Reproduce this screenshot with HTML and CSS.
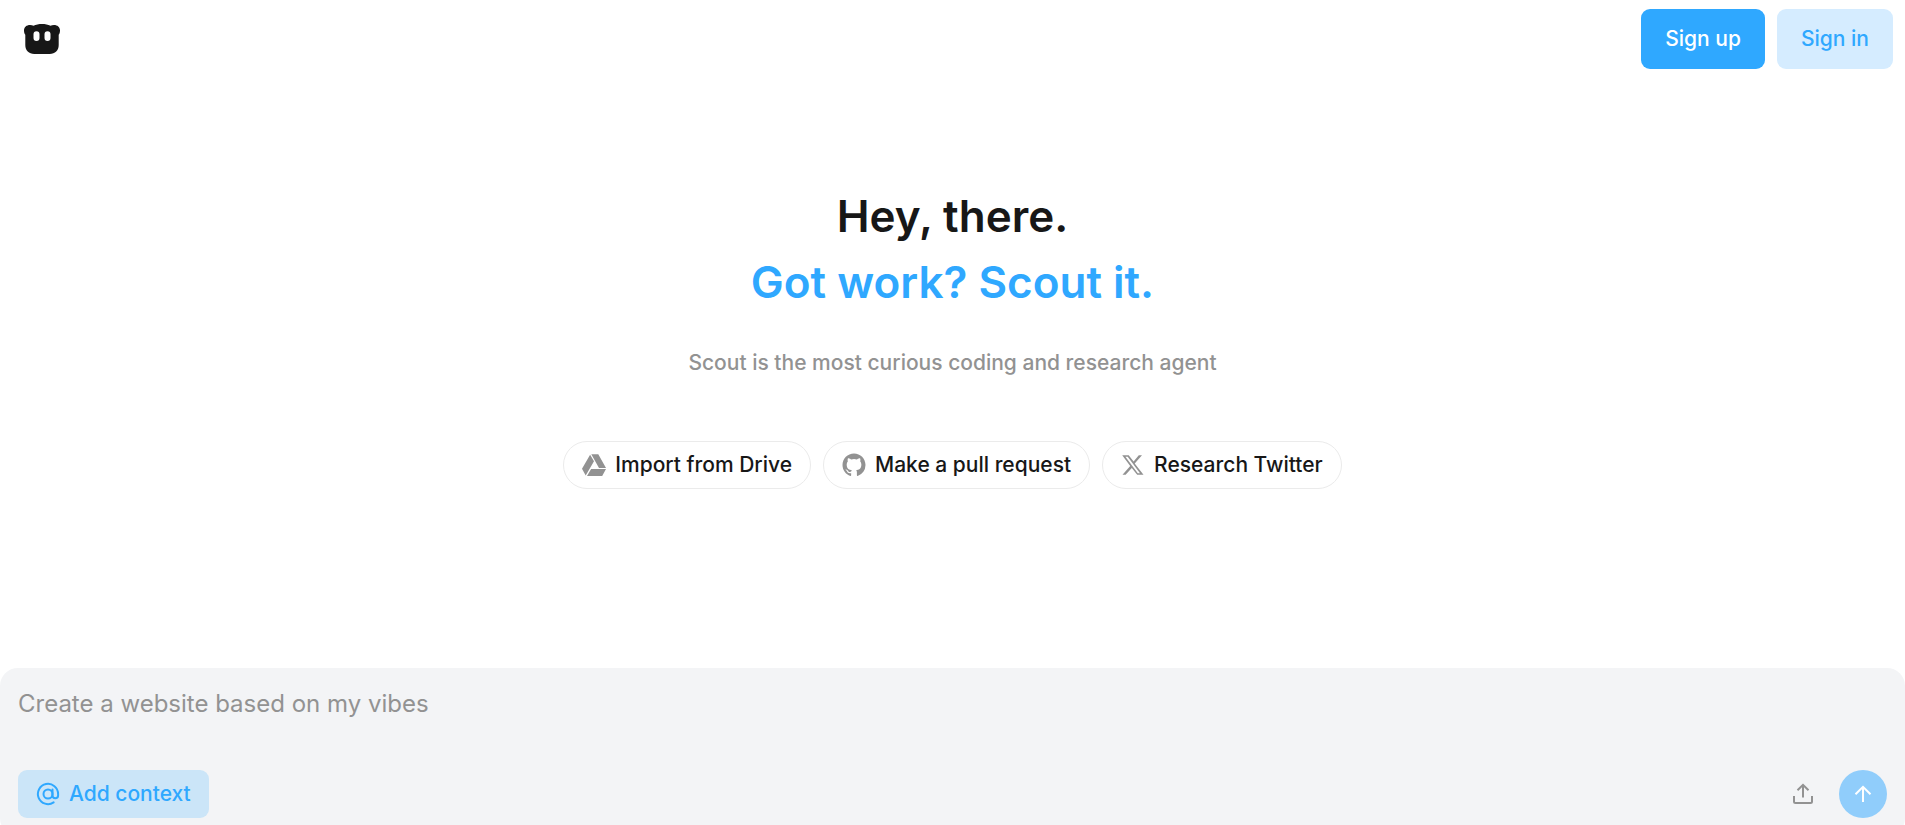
FILE: index.html
```html
<!DOCTYPE html>
<html lang="en">
<head>
    <meta charset="UTF-8">
    <meta name="viewport" content="width=device-width, initial-scale=1.0">
    <title>Scout</title>
    <link rel="stylesheet" href="styles.css">
</head>
<body>
    <header class="header">
        <a href="#" class="logo" aria-label="Scout">
            <svg width="36" height="30" viewBox="0 0 36 30">
                <path fill="#171717" fill-rule="evenodd" d="M9.500 1.800C12 .6 14.800 0 18 0s6 .6 8.500 1.800C27.400 1.200 28.600.9 30 .9c3.400 0 6 2.200 6 5.300 0 2-.5 3.600-1.300 4.500V21c0 5.500-3.600 9-9 9H10.300c-5.400 0-9-3.500-9-9V10.700C.5 9.800 0 8.200 0 6.200 0 3.100 2.600.9 6 .9c1.400 0 2.600.3 3.500.9ZM12.500 7.300a3 3 0 0 0-3 3v3.600a3 3 0 0 0 6 0v-3.600a3 3 0 0 0-3-3Zm11 0a3 3 0 0 0-3 3v3.600a3 3 0 0 0 6 0v-3.600a3 3 0 0 0-3-3Z"/>
            </svg>
        </a>
        <nav class="auth">
            <a href="#" class="auth-link primary">Sign up</a>
            <a href="#" class="auth-link">Sign in</a>
        </nav>
    </header>

    <main class="hero">
        <h1 class="title">Hey, there.<br><span class="title-accent">Got work? Scout it.</span></h1>
        <p class="subtitle">Scout is the most curious coding and research agent</p>
        <div class="chips">
            <button type="button" class="chip">
                <svg width="24" height="24" viewBox="0 0 24 24" fill="currentColor">
                    <path d="M8.100 1.800 0 15.800l3.700 6.700 8.300-14.200ZM9.300 1.300l7.700 13.600h7L16.300 1.300ZM9.100 15.900 5 22.900h15.200L24 15.900Z"/>
                </svg>
                Import from Drive
            </button>
            <button type="button" class="chip">
                <svg width="24" height="24" viewBox="0 0 24 24" fill="currentColor">
                    <path d="M12 .5C5.650.5.5 5.650.5 12c0 5.080 3.290 9.390 7.860 10.910.58.110.79-.25.79-.56v-2.140c-3.200.7-3.870-1.360-3.870-1.360-.52-1.330-1.280-1.680-1.280-1.680-1.040-.71.080-.7.080-.7 1.160.080 1.770 1.190 1.770 1.190 1.030 1.760 2.700 1.250 3.350.96.100-.75.400-1.250.73-1.540-2.550-.29-5.240-1.280-5.240-5.690 0-1.260.45-2.280 1.190-3.090-.12-.29-.52-1.460.11-3.040 0 0 .96-.31 3.160 1.180a10.900 10.900 0 0 1 5.760 0c2.190-1.490 3.150-1.180 3.150-1.180.63 1.580.23 2.750.12 3.040.74.810 1.180 1.830 1.180 3.090 0 4.420-2.690 5.390-5.250 5.680.41.360.78 1.060.78 2.130v3.160c0 .31.210.67.800.56A11.500 11.500 0 0 0 23.500 12C23.500 5.650 18.350.5 12 .5Z"/>
                </svg>
                Make a pull request
            </button>
            <button type="button" class="chip">
                <svg width="24" height="24" viewBox="0 0 24 24" fill="currentColor">
                    <path d="M17.800 2.200H21l-7.300 8.300L22.500 21.800h-6.300l-5.400-6.900-6.200 6.900H1.500l7.700-8.800L1.200 2.200h6.500l4.900 6.300ZM16.800 20.200h2.200L6.700 3.800H4.400Z" fill-rule="evenodd"/>
                </svg>
                Research Twitter
            </button>
        </div>
    </main>

    <form class="composer">
        <textarea class="prompt" rows="2" aria-label="Message" placeholder="Create a website based on my vibes"></textarea>
        <div class="toolbar">
            <button type="button" class="context-button">
                <svg width="24" height="24" viewBox="0 0 24 24" fill="none" stroke="currentColor" stroke-width="2" stroke-linecap="round">
                    <circle cx="12" cy="12" r="4.500"/>
                    <path d="M16.500 7.500v6a2.800 2.800 0 0 0 5.600 0V12a10.100 10.100 0 1 0-4.500 8.400"/>
                </svg>
                Add context
            </button>
            <div class="actions">
                <button type="button" class="icon-button" aria-label="Upload file">
                    <svg width="24" height="24" viewBox="0 0 24 24" fill="none" stroke="currentColor" stroke-width="2">
                        <path d="M12 15.500V3M6.500 8.300 12 2.800l5.500 5.500M3 14v5.500a1.500 1.500 0 0 0 1.500 1.500h15a1.500 1.500 0 0 0 1.500-1.500V14"/>
                    </svg>
                </button>
                <button type="submit" class="send-button" aria-label="Send">
                    <svg width="24" height="24" viewBox="0 0 24 24" fill="none" stroke="currentColor" stroke-width="2">
                        <path d="M12 20V5M4.500 12.300 12 4.800l7.500 7.500"/>
                    </svg>
                </button>
            </div>
        </div>
    </form>
</body>
</html>
```
FILE: styles.css
```css
* {
    box-sizing: border-box;
    margin: 0;
    padding: 0;
}

body {
    display: flex;
    flex-direction: column;
    height: 100vh;
    overflow: hidden;
    font-family: Inter, "Liberation Sans", sans-serif;
    font-size: 21px;
    font-weight: 500;
    line-height: 30px;
    color: #171717;
    background: #fff;
}

button,
textarea {
    font: inherit;
    border: none;
    background: none;
}

button {
    cursor: pointer;
}

a {
    text-decoration: none;
}

svg {
    display: block;
    flex-shrink: 0;
}

.header {
    display: flex;
    align-items: center;
    justify-content: space-between;
    padding: 9px 12px 9px 24px;
}

.auth {
    display: flex;
    gap: 12px;
}

.auth-link {
    padding: 15px 24px;
    border-radius: 9px;
    color: #2fa8ff;
    background: #d5ecff;
}

.auth-link.primary {
    color: #fff;
    background: #2fa8ff;
}

.hero {
    flex: 1;
    display: flex;
    flex-direction: column;
    align-items: center;
    padding: 105px 24px 24px;
    text-align: center;
}

.title {
    font-size: 44px;
    font-weight: 600;
    line-height: 66px;
}

.title-accent {
    color: #2fa8ff;
}

.subtitle {
    margin-top: 33px;
    color: #929292;
}

.chips {
    display: flex;
    flex-wrap: wrap;
    justify-content: center;
    gap: 12px;
    margin-top: 63px;
}

.chip {
    display: flex;
    align-items: center;
    gap: 9px;
    padding: 8px 18px;
    border: 1px solid #ebebeb;
    border-radius: 24px;
    color: #171717;
}

.chip svg {
    color: #929292;
}

/* bottom padding runs below the fold */
.composer {
    display: flex;
    flex-direction: column;
    gap: 12px;
    margin-bottom: -11px;
    padding: 18px;
    border-radius: 18px;
    background: #f3f4f6;
}

.prompt {
    width: 100%;
    height: 72px;
    font-size: 24px;
    font-weight: 400;
    line-height: 36px;
    color: #171717;
    outline: none;
    resize: none;
}

.prompt::placeholder {
    color: #929292;
}

.toolbar {
    display: flex;
    align-items: center;
    justify-content: space-between;
}

.context-button {
    display: flex;
    align-items: center;
    gap: 9px;
    padding: 9px 18px;
    border-radius: 9px;
    color: #2fa8ff;
    background: #cbe5f8;
}

.actions {
    display: flex;
    align-items: center;
    gap: 12px;
}

.icon-button,
.send-button {
    display: flex;
    align-items: center;
    justify-content: center;
    width: 48px;
    height: 48px;
    border-radius: 24px;
}

.icon-button {
    color: #929292;
}

.send-button {
    color: #fff;
    background: #90cdfb;
}
```
